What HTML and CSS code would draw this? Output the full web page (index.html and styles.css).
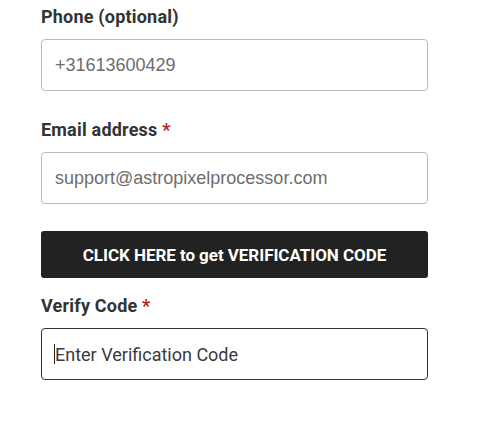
FILE: index.html
```html
<!DOCTYPE html>
<html lang="en">
<head>
<meta charset="utf-8">
<title>Verification form</title>
<link rel="stylesheet" href="styles.css">
</head>
<body>
<form class="form">
  <div class="field">
    <label class="label" for="phone">Phone (optional)</label>
    <input class="input" id="phone" type="tel" value="+31613600429">
  </div>
  <div class="field">
    <label class="label" for="email">Email address <span class="req">*</span></label>
    <input class="input" id="email" type="email" value="support@astropixelprocessor.com">
  </div>
  <button class="btn" type="button">CLICK HERE to get VERIFICATION CODE</button>
  <div class="field field-last">
    <label class="label" for="code">Verify Code <span class="req">*</span></label>
    <div class="input-wrap">
      <input class="input input-focus" id="code" type="text" placeholder="Enter Verification Code">
      <span class="caret"></span>
    </div>
  </div>
</form>
</body>
</html>
```
FILE: styles.css
```css
html, body {
  margin: 0;
  padding: 0;
  background: #ffffff;
}
.form {
  width: 387px;
  padding: 5px 0 0 41px;
  display: flex;
  flex-direction: column;
}
.field {
  display: flex;
  flex-direction: column;
  margin-bottom: 27px;
}
.label {
  font-family: Roboto, "Liberation Sans", sans-serif;
  font-weight: 700;
  font-size: 18px;
  line-height: 24px;
  letter-spacing: 0.2px;
  color: #333333;
  margin-bottom: 10px;
}
.req {
  color: #b22222;
}
.input {
  box-sizing: border-box;
  width: 387px;
  height: 52px;
  margin: 0;
  padding: 0 13px;
  border: 1px solid #bbbbbb;
  border-radius: 4px;
  background: #ffffff;
  font-family: "Liberation Sans", Arial, sans-serif;
  font-size: 18px;
  color: #6d6d6d;
  outline: none;
}
.btn {
  box-sizing: border-box;
  width: 387px;
  height: 47px;
  margin: 0 0 16px;
  border: none;
  border-radius: 3px;
  background: #222222;
  color: #ffffff;
  font-family: Roboto, "Liberation Sans", sans-serif;
  font-weight: 700;
  font-size: 17px;
  letter-spacing: -0.05px;
  cursor: pointer;
}
.input-wrap {
  position: relative;
}
.input-focus {
  border-color: #333333;
  font-family: Roboto, "Liberation Sans", sans-serif;
  color: #333333;
  caret-color: transparent;
}
.input-focus::placeholder {
  color: #3a3a3a;
  opacity: 1;
}
.caret {
  position: absolute;
  left: 13px;
  top: 16px;
  width: 1px;
  height: 20px;
  background: #222222;
}
```
